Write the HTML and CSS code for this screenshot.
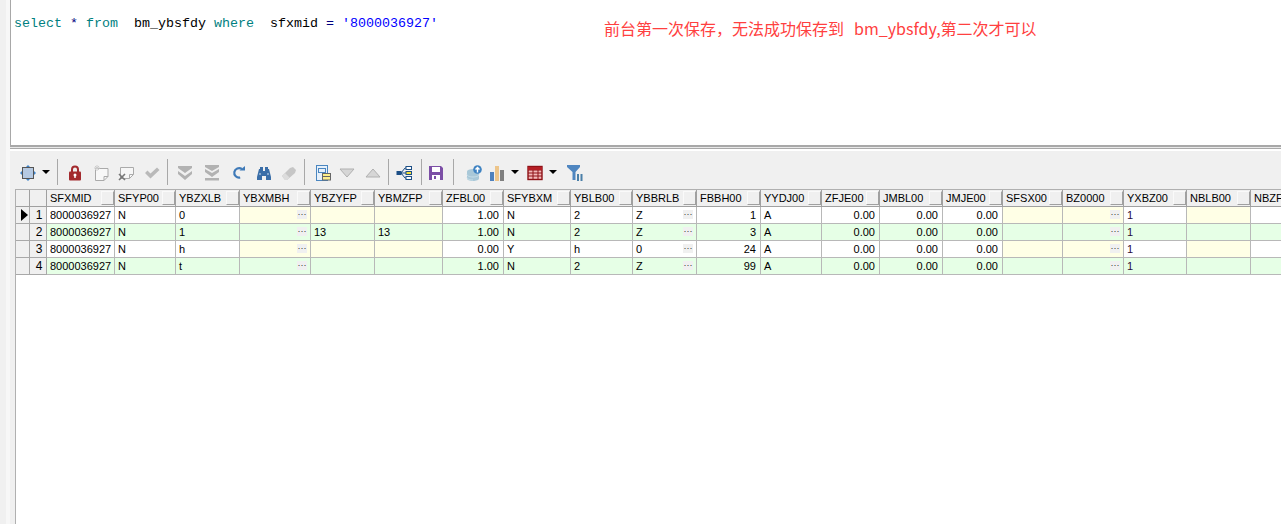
FILE: index.html
```html
<!DOCTYPE html>
<html lang="zh">
<head>
<meta charset="utf-8">
<title>SQL</title>
<link rel="stylesheet" href="styles.css">
</head>
<body>
<div class="app">
  <div class="gutter"></div>
  <div class="main">
    <div class="editor">
      <div class="sql"><span class="kw">select</span> <span class="op">*</span> <span class="kw">from</span>  bm_ybsfdy <span class="kw">where</span>  sfxmid <span class="op">=</span> <span class="str">'8000036927'</span></div>
      <div class="note">前台第一次保存，无法成功保存到  bm_ybsfdy,第二次才可以</div>
    </div>
    <div class="splitter"></div>
    <div class="toolbar">
      <svg class="ic" viewBox="0 0 16 16"><rect x="2.500" y="2.500" width="11" height="11" fill="#b5c9e2" stroke="#555"/><path d="M8 0l2 2H6zM8 16l-2-2h4zM0 8l2-2v4zM16 8l-2 2V6z" fill="#3f83c9"/></svg>
      <span class="caret g6"></span>
      <span class="sep g7"></span>
      <svg class="ic g9" viewBox="0 0 16 16"><path d="M5 7V4.500a3 3 0 0 1 6 0V7" fill="none" stroke="#a32a2e" stroke-width="2"/><rect x="2" y="6.500" width="12" height="9" rx="1" fill="#a32a2e"/><circle cx="8" cy="10" r="1.500" fill="#fff"/><rect x="7.300" y="10" width="1.400" height="3" fill="#fff"/></svg>
      <svg class="ic g10" viewBox="0 0 16 16"><path d="M2.500 3.500h12.500v8l-4 4H2.500z" fill="#f8f8f8" stroke="#aaa"/><path d="M11 15.500v-4h4" fill="none" stroke="#aaa"/><path d="M4 0v6M1 3h6M2 1l4 4M6 1L2 5" stroke="#ccc"/></svg>
      <svg class="ic g9" viewBox="0 0 16 16"><path d="M2.500 2.500h13v7l-4 4h-9z" fill="#f6f6f6" stroke="#aaa"/><path d="M11.500 13.500v-4h4" fill="none" stroke="#aaa"/><path d="M1 9l6 6M7 9l-6 6" stroke="#777" stroke-width="1.600"/></svg>
      <svg class="ic g10" viewBox="0 0 16 16"><path d="M1 8l2.500-2.500L6.500 8.500 13 2.500 15.500 5 6.500 13.500z" fill="#b9b9b9"/></svg>
      <span class="sep g7"></span>
      <svg class="ic g9" viewBox="0 0 16 16"><path d="M1 1h14v2L8 8 1 3zM1 6l7 5 7-5v3l-7 6-7-6z" fill="#b2b2b2"/></svg>
      <svg class="ic g11" viewBox="0 0 16 16"><path d="M1 0h14v2L8 6 1 2zM1 4l7 4 7-4v3l-7 5-7-5z" fill="#b2b2b2"/><rect x="1" y="13" width="14" height="2.500" fill="#b2b2b2"/></svg>
      <svg class="ic g10" viewBox="0 0 16 16"><path d="M13 5.500A4.800 4.800 0 1 0 8.500 13" fill="none" stroke="#3f7ab8" stroke-width="2.200" transform="rotate(-20 8 8)"/><path d="M9.500 5.500h5.500V1z" fill="#3f7ab8"/></svg>
      <svg class="ic g10" viewBox="0 0 16 16"><path d="M3 4h4v2h2V4h4l2 8v3h-5v-4H6v4H1v-3z" fill="#3a6ea8"/><rect x="4" y="2" width="3" height="2" fill="#3a6ea8"/><rect x="9" y="2" width="3" height="2" fill="#3a6ea8"/><path d="M3 9h2M11 9h2" stroke="#cfe0f2"/></svg>
      <svg class="ic g9" viewBox="0 0 16 16"><path d="M1 11l8-8 3-1 3 3-1 3-8 7H4z" fill="#c6c6c6"/><path d="M1 11l3-3 4.500 4.500L6 15H4z" fill="#dcdcdc"/></svg>
      <span class="sep g7"></span>
      <svg class="ic g10" viewBox="0 0 16 16"><rect x="1.500" y="0.500" width="11" height="15" fill="#e6f0fa" stroke="#4a86c0"/><rect x="3.500" y="3.500" width="7" height="4" fill="none" stroke="#4a86c0"/><rect x="7.500" y="8.500" width="8" height="6.500" fill="#ffef8a" stroke="#666"/><path d="M8 11.500h7" stroke="#666"/></svg>
      <svg class="ic g8" viewBox="0 0 16 16"><path d="M1 4h14L8 12z" fill="#d6d6d6" stroke="#b0b0b0"/></svg>
      <svg class="ic g10" viewBox="0 0 16 16"><path d="M1 12h14L8 4z" fill="#d6d6d6" stroke="#b0b0b0"/></svg>
      <span class="sep g7"></span>
      <svg class="ic g7" viewBox="0 0 16 16"><path d="M5 8l4-5h2M5 8h6M5 8l4 5h2" fill="none" stroke="#1c4f86"/><rect x="0.500" y="6" width="5" height="4" fill="#1c4f86"/><rect x="10" y="1.500" width="5.500" height="3" fill="#fff" stroke="#1c4f86"/><rect x="10" y="6.500" width="5.500" height="3" fill="#f6e23a" stroke="#1c4f86"/><rect x="10" y="11.500" width="5.500" height="3" fill="#fff" stroke="#1c4f86"/></svg>
      <span class="sep g9"></span>
      <svg class="ic g6" viewBox="0 0 16 16"><path d="M1 1h12l2 2v12H1z" fill="#7c4fa6"/><rect x="4" y="2" width="8" height="5" fill="#fff"/><rect x="4" y="10" width="8" height="5" fill="#fff"/><rect x="6" y="11" width="2" height="3" fill="#7c4fa6"/></svg>
      <span class="sep g9"></span>
      <svg class="ic g12" viewBox="0 0 16 16"><ellipse cx="7" cy="6.500" rx="6" ry="2.500" fill="#a9c8d8"/><path d="M1 6.500v7c0 1.400 2.700 2.500 6 2.500s6-1.100 6-2.500v-7z" fill="#a9c8d8"/><path d="M1 9.500c0 1.400 2.700 2.500 6 2.500s6-1.100 6-2.500M1 12.500c0 1.400 2.700 2.500 6 2.500" fill="none" stroke="#c9dfe9"/><circle cx="11.500" cy="4.500" r="4.300" fill="#3f83c2"/><path d="M11.500 7.500V3M9.500 4.500l2-2 2 2" fill="none" stroke="#fff" stroke-width="1.400"/></svg>
      <svg class="ic g7" viewBox="0 0 16 16"><rect x="1" y="7" width="4" height="9" fill="#4f81bd"/><rect x="6" y="1" width="4" height="15" fill="#edc58a"/><rect x="11" y="5" width="4" height="11" fill="#7f7f7f"/></svg>
      <span class="caret g6"></span>
      <svg class="ic g8" viewBox="0 0 16 16"><rect x="1" y="1.500" width="14" height="13" fill="#f3b9b9" stroke="#8e1116" stroke-width="1.400"/><path d="M1 5h14M1 8h14M1 11h14M6 5v9.500M11 5v9.500" stroke="#8e1116"/><rect x="1" y="2" width="14" height="3" fill="#b51e24"/></svg>
      <span class="caret g6"></span>
      <svg class="ic g10" viewBox="0 0 16 16"><path d="M0 0h13v2L8.500 7v8h-3V7L0 2z" fill="#4f86c0"/><rect x="10" y="9" width="2" height="7" fill="#4a7fa8"/><rect x="13.500" y="9" width="2" height="7" fill="#4a7fa8"/></svg>
    </div>
    <div class="results">
      <div class="grid">
        <div class="row head">
          <div class="c fix"></div><div class="c fix"></div>
          <div class="c h">SFXMID<i class="sb"></i></div><div class="c h">SFYP00<i class="sb"></i></div><div class="c h">YBZXLB<i class="sb"></i></div><div class="c h">YBXMBH<i class="sb"></i></div><div class="c h">YBZYFP<i class="sb"></i></div><div class="c h">YBMZFP<i class="sb"></i></div><div class="c h">ZFBL00<i class="sb"></i></div><div class="c h">SFYBXM<i class="sb"></i></div><div class="c h">YBLB00<i class="sb"></i></div><div class="c h">YBBRLB<i class="sb"></i></div><div class="c h">FBBH00<i class="sb"></i></div><div class="c h">YYDJ00<i class="sb"></i></div><div class="c h">ZFJE00<i class="sb"></i></div><div class="c h">JMBL00<i class="sb"></i></div><div class="c h">JMJE00<i class="sb"></i></div><div class="c h">SFSX00<i class="sb"></i></div><div class="c h">BZ0000<i class="sb"></i></div><div class="c h">YXBZ00<i class="sb"></i></div><div class="c h">NBLB00<i class="sb"></i></div><div class="c h">NBZFP</div>
        </div>
        <div class="row">
          <div class="c fix"><span class="arrow"></span></div><div class="c fix num">1</div>
          <div class="c">8000036927</div><div class="c">N</div><div class="c">0</div><div class="c y"><b class="dots">···</b></div><div class="c y"></div><div class="c y"></div><div class="c r">1.00</div><div class="c">N</div><div class="c">2</div><div class="c">Z<b class="dots">···</b></div><div class="c r">1</div><div class="c">A</div><div class="c r">0.00</div><div class="c r">0.00</div><div class="c r">0.00</div><div class="c y"></div><div class="c y"><b class="dots">···</b></div><div class="c p">1</div><div class="c y"></div><div class="c"></div>
        </div>
        <div class="row even">
          <div class="c fix"></div><div class="c fix num">2</div>
          <div class="c">8000036927</div><div class="c">N</div><div class="c">1</div><div class="c"><b class="dots">···</b></div><div class="c">13</div><div class="c">13</div><div class="c r">1.00</div><div class="c">N</div><div class="c">2</div><div class="c">Z<b class="dots">···</b></div><div class="c r">3</div><div class="c">A</div><div class="c r">0.00</div><div class="c r">0.00</div><div class="c r">0.00</div><div class="c"></div><div class="c"><b class="dots">···</b></div><div class="c p">1</div><div class="c"></div><div class="c"></div>
        </div>
        <div class="row">
          <div class="c fix"></div><div class="c fix num">3</div>
          <div class="c">8000036927</div><div class="c">N</div><div class="c">h</div><div class="c y"><b class="dots">···</b></div><div class="c y"></div><div class="c y"></div><div class="c r">0.00</div><div class="c">Y</div><div class="c">h</div><div class="c">0<b class="dots">···</b></div><div class="c r">24</div><div class="c">A</div><div class="c r">0.00</div><div class="c r">0.00</div><div class="c r">0.00</div><div class="c y"></div><div class="c y"><b class="dots">···</b></div><div class="c p">1</div><div class="c y"></div><div class="c"></div>
        </div>
        <div class="row even">
          <div class="c fix"></div><div class="c fix num">4</div>
          <div class="c">8000036927</div><div class="c">N</div><div class="c">t</div><div class="c"><b class="dots">···</b></div><div class="c"></div><div class="c"></div><div class="c r">1.00</div><div class="c">N</div><div class="c">2</div><div class="c">Z<b class="dots">···</b></div><div class="c r">99</div><div class="c">A</div><div class="c r">0.00</div><div class="c r">0.00</div><div class="c r">0.00</div><div class="c"></div><div class="c"><b class="dots">···</b></div><div class="c p">1</div><div class="c"></div><div class="c"></div>
        </div>
      </div>
    </div>
  </div>
</div>
</body>
</html>
```
FILE: styles.css
```css
* { box-sizing: border-box; }
html, body { margin: 0; height: 100%; overflow: hidden; background: #fff; }
.app { display: flex; height: 524px; width: 1281px; overflow: hidden; }
.gutter { width: 10px; flex: none; background: linear-gradient(to right, #f0f0f0 6px, #f7f7f7 6px); }
.main { flex: 1; min-width: 0; display: flex; flex-direction: column; }

.editor { height: 145px; flex: none; display: flex; align-items: flex-start; border-left: 1px solid #a8a8a8; padding-left: 3px; background: #fff; }
.sql { margin-top: 16px; font: 13.33px/16px "Liberation Mono", monospace; white-space: pre; color: #000; }
.kw { color: #008080; }
.op { color: #000080; }
.str { color: #0000ff; }
.note { margin: 20px 0 0 166px; font: 16px/16px "Noto Sans CJK SC", sans-serif; word-spacing: 1.500px; white-space: pre; color: #ff4040; }

.splitter { height: 6px; flex: none; background: #fff; border-top: 2px solid #a8a8a8; box-shadow: inset 0 1px 0 #e8e8e8; }
.splitter::after { content: ""; display: block; height: 1px; margin-top: 1px; background: #a8a8a8; }

.toolbar { height: 38px; flex: none; display: flex; align-items: center; padding: 8px 0 4px 10px; background: #f0f0f0; }
.ic { width: 16px; height: 16px; flex: none; display: block; position: relative; top: 1px; }
.caret { width: 0; height: 0; flex: none; border: 4px solid transparent; border-top-color: #000; border-bottom-width: 0; }
.sep { width: 1px; height: 26px; flex: none; background: #a8a8a8; }
.g6 { margin-left: 6px; }
.g7 { margin-left: 7px; }
.g8 { margin-left: 8px; }
.g9 { margin-left: 9px; }
.g10 { margin-left: 10px; }
.g11 { margin-left: 11px; }
.g12 { margin-left: 12px; }

.results { flex: 1; min-height: 0; background: #f0f0f0; padding-left: 5px; overflow: hidden; }
.grid { height: 100%; width: 1400px; display: grid; grid-template-columns: 14px 17px 68px 61px 64px 71px 64px 68px 61px 67px 62px 64px 64px 61px 58px 63px 60px 60px 61px 63px 64px 80px; grid-auto-rows: 17px; align-content: start; background: #fff; border-top: 1px solid #b0b0b0; border-left: 1px solid #b0b0b0; font: 11px/16px "Liberation Sans", sans-serif; color: #000; }
.row { display: contents; }
.c { display: flex; align-items: center; min-width: 0; padding: 0 3px; white-space: nowrap; background: #fff; border-right: 1px solid #b8b8b8; border-bottom: 1px solid #b8b8b8; }
.even .c { background: #e6ffe6; }
.row .y { background: #ffffe6; }
.row .fix { background: #f0f0f0; border-color: #a8a8a8; }
.row .num { justify-content: center; padding: 0 0 0 2px; font-size: 12px; }
.head .c { background: #f0f0f0; border-color: #a0a0a0; }
.h { justify-content: space-between; padding-right: 0; }
.sb { width: 13px; height: 14px; flex: none; border: 1px solid; border-color: #fafafa #a0a0a0 #a0a0a0 #fafafa; }
.r { justify-content: flex-end; padding-right: 4px; }
.p { color: #2a0a38; }
.dots { margin-left: auto; width: 10px; height: 9px; align-self: flex-start; margin-top: 3px; background: #f0f0f0; color: #333; font: 9px/8px "Liberation Sans", sans-serif; text-align: center; }
.arrow { width: 0; height: 0; margin-left: 2px; border-style: solid; border-width: 6px 0 6px 7px; border-color: transparent transparent transparent #000; }
```
